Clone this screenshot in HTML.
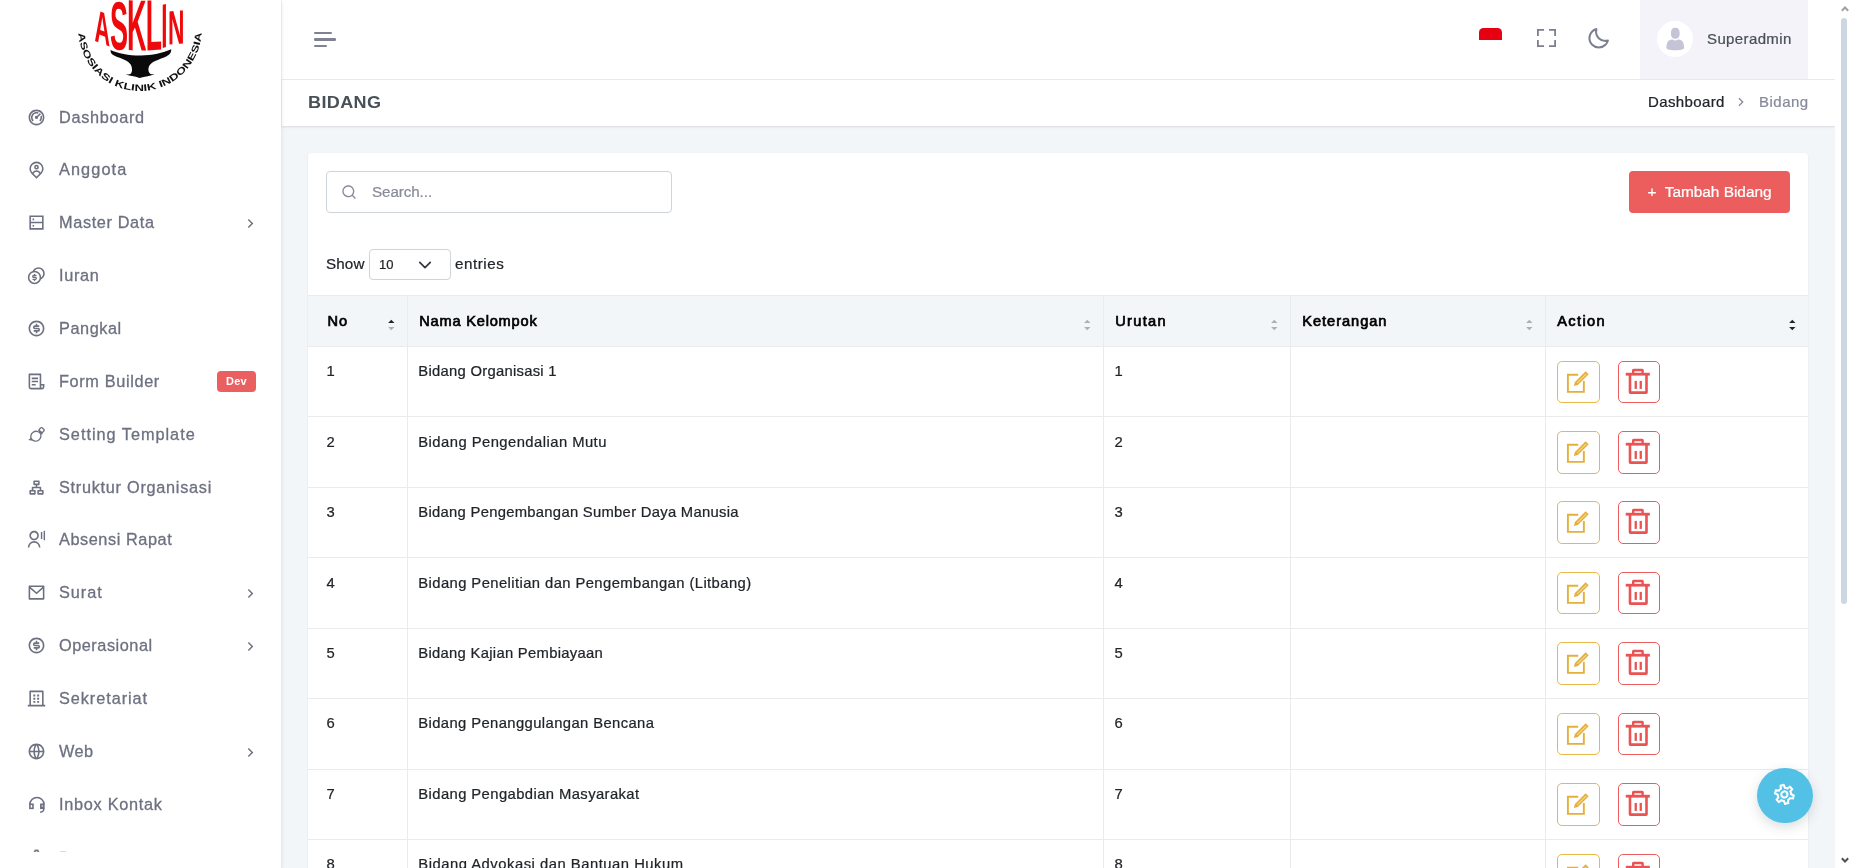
<!DOCTYPE html>
<html lang="id">
<head>
<meta charset="utf-8">
<title>Bidang</title>
<style>
*{box-sizing:border-box;margin:0;padding:0}
html,body{width:1853px;height:868px;overflow:hidden;background:#f3f6f9;font-family:"Liberation Sans",sans-serif;color:#212529}
body{position:relative;-webkit-text-stroke:.22px currentColor}
#sidebar,#topbar,#titlebar,#card{will-change:transform}
.abs{position:absolute}
/* sidebar */
#sidebar{position:absolute;left:0;top:0;width:281px;height:868px;background:#fff;box-shadow:0 2px 4px rgba(15,34,58,.14);z-index:5}
#menu{position:absolute;left:0;top:0;width:281px;height:852px;overflow:hidden}
.mi{-webkit-text-stroke:.3px currentColor;position:absolute;left:0;width:281px;height:52.86px;color:#6d7080;font-size:16.3px;letter-spacing:.1px}
.mi svg.ic{position:absolute;left:27px;top:17px;width:19px;height:19px;fill:#6d7080}
.mi span.t{position:absolute;left:59px;top:0;line-height:52.86px;white-space:nowrap}
.mi svg.ar{position:absolute;left:242px;top:18.700px;width:17px;height:17px;fill:#6d7080}
.badge{-webkit-text-stroke:0;position:absolute;left:217px;top:16.200px;width:39px;height:20.800px;background:#ea5f5f;color:#fff;border-radius:4px;font-size:11px;font-weight:bold;text-align:center;line-height:20.800px;letter-spacing:.3px}
/* topbar */
#topbar{position:absolute;left:282px;top:0;width:1553px;height:80px;background:#fff;border-bottom:1px solid #e9ebec}
#titlebar{position:absolute;left:282px;top:80px;width:1553px;height:46px;background:#fff;box-shadow:0 1px 2px rgba(56,65,74,.15)}
#user{position:absolute;left:1358px;top:0;width:168px;height:79px;background:#f3f3f9}
/* card */
#card{position:absolute;left:308px;top:153px;width:1499.700px;overflow:hidden;height:760px;background:#fff;border-radius:4px;box-shadow:0 1px 2px rgba(56,65,74,.12)}
#search{position:absolute;left:18px;top:18px;width:346px;height:42px;border:1px solid #ced4da;border-radius:4px;background:#fff}
#search span{position:absolute;left:45px;top:0;line-height:40px;font-size:15.2px;color:#878a99}
#add{position:absolute;left:1321px;top:18px;width:161px;height:42px;background:#ec5e5e;border-radius:4px;color:#fff;font-size:15.4px;line-height:42px;text-align:center;white-space:nowrap}
table{position:absolute;left:0;top:142px;width:1500px;border-collapse:collapse;table-layout:fixed;font-size:15.2px}
th{height:52px;background:#f3f6f9;text-align:left;font-weight:bold;padding:0 0 2px 11px;border:1px solid #e9ebec;font-size:14.6px;position:relative;color:#212529}
td{height:70.5px;vertical-align:top;padding:14px 0 0 11px;border:1px solid #e9ebec;color:#212529}
tr td:first-child,tr th:first-child{padding-left:18px}
.btn{position:absolute;width:42.7px;height:42.7px;border-radius:5px;background:#fff;overflow:visible}
.be{border:1px solid #e8b84a}
.bd{border:1px solid #ec5e5e;width:41.900px}
td.act{position:relative;padding:0}
.srt{position:absolute;right:11px;top:21px;width:8px;height:14px}

</style>
</head>
<body>
<div id="sidebar"><div id="menu">
<div style="position:absolute;left:0;top:0;width:200px;height:11px;font:bold 10px/11px 'Liberation Sans',sans-serif;color:#ee0a0a;white-space:nowrap;-webkit-text-stroke:0;letter-spacing:0"><span style="display:inline-block;transform-origin:0 0;transform:matrix(2.1613,0.8198,0,4.5785,94.462,-0.411)">A</span><span style="display:inline-block;transform-origin:0 0;transform:matrix(2.7041,0.1669,0,6.8314,103.000,-12.531)">S</span><span style="display:inline-block;transform-origin:0 0;transform:matrix(2.6935,0.0774,0,7.2238,112.906,-15.066)">K</span><span style="display:inline-block;transform-origin:0 0;transform:matrix(2.6500,-0.1559,0,7.2384,124.714,-14.741)">L</span><span style="display:inline-block;transform-origin:0 0;transform:matrix(2.2222,-0.5556,0,6.2791,134.292,-8.340)">I</span><span style="display:inline-block;transform-origin:0 0;transform:matrix(2.2793,-0.1701,0,4.7965,137.875,1.245)">N</span></div><svg class="abs" style="left:0;top:0" width="281" height="100" viewBox="0 0 281 100">
<path fill="#0a0a0a" d="M110.6 50.0 C118 53.5 130 55.8 141 55.6 C152 55.4 163 53 171.2 49.300 C171.6 53 169 55.500 164 57.500 C156 60.500 149.500 62.500 148.500 68 C148 71 149 73 150.500 74 C152 74.500 153.500 74.300 154.600 74.200 C151 76 145 76.200 139.500 77.900 C135 76.300 129 76 124.800 74.300 C127 74.600 129.500 74.600 131 73.500 C132.500 71.500 132.300 68 131 65 C128.500 60.500 121 58.500 115 56 C111.500 54.500 110.300 52.500 110.600 50.0 Z"/>
<path id="arc" fill="none" d="M78.400 29.400 A61.600 61.600 0 0 0 201.600 29.400"/>
<text font-family="'Liberation Sans',sans-serif" font-weight="bold" font-size="9.400" fill="#111" textLength="186" lengthAdjust="spacingAndGlyphs"><textPath href="#arc" startOffset="3.800" textLength="186" lengthAdjust="spacingAndGlyphs">ASOSIASI KLINIK INDONESIA</textPath></text>
</svg>
<div class="mi" style="top:90.60px"><svg class="ic" viewBox="0 0 24 24"><path d="M12 2c5.523 0 10 4.477 10 10s-4.477 10-10 10S2 17.523 2 12 6.477 2 12 2zm0 2a8 8 0 1 0 0 16 8 8 0 0 0 0-16zm0 1c1.018 0 1.985.217 2.858.608L13.295 7.17A5.002 5.002 0 0 0 7 12a4.98 4.98 0 0 0 1.464 3.536L7.05 16.95A6.978 6.978 0 0 1 5 12c0-3.866 3.134-7 7-7zm6.392 4.143c.39.872.608 1.84.608 2.857a6.978 6.978 0 0 1-2.05 4.95l-1.414-1.414A4.98 4.98 0 0 0 17 12c0-.44-.057-.868-.164-1.275l1.556-1.582zm-2.15-2.8l1.415 1.415-3.725 3.724a2 2 0 1 1-1.414-1.414l3.724-3.725z"/></svg><span class="t" id="m0" style="letter-spacing:0.68px">Dashboard</span></div>
<div class="mi" style="top:143.46px"><svg class="ic" viewBox="0 0 24 24"><path d="M17.084 15.812a7 7 0 1 0-10.168 0A5.996 5.996 0 0 1 12 13a5.996 5.996 0 0 1 5.084 2.812zm-8.699 1.473L12 20.899l3.615-3.614a4 4 0 0 0-7.230 0zM12 23.728l-6.364-6.364a9 9 0 1 1 12.728 0L12 23.728zM12 10a1 1 0 1 0 0-2 1 1 0 0 0 0 2zm0 2a3 3 0 1 1 0-6 3 3 0 0 1 0 6z"/></svg><span class="t" id="m1" style="letter-spacing:1.105px">Anggota</span></div>
<div class="mi" style="top:196.32px"><svg class="ic" viewBox="0 0 24 24"><path d="M21 3v18H3V3h18zm-2 10H5v6h14v-6zm0-8H5v6h14V5zM9 15v2H7v-2h2zm0-8v2H7V7h2z"/></svg><span class="t" id="m2" style="letter-spacing:0.631px">Master Data</span><svg class="ar" viewBox="0 0 24 24"><path d="M13.172 12l-4.950-4.950 1.414-1.414L16 12l-6.364 6.364-1.414-1.414z"/></svg></div>
<div class="mi" style="top:249.18px"><svg class="ic" viewBox="0 0 24 24"><circle cx="14.5" cy="9.500" r="7" fill="none" stroke="#6d7080" stroke-width="2"/><circle cx="9.500" cy="14.500" r="7.500" fill="#fff" stroke="#6d7080" stroke-width="2"/><path d="M7 16h3.600a.4.4 0 1 0 0-.8H8.400a2 2 0 1 1 0-4h.3V10h1.600v1.200H12v1.600H8.400a.4.4 0 1 0 0 .8h2.200a2 2 0 1 1 0 4h-.300V19H8.700v-1.400H7V16z"/></svg><span class="t" id="m3" style="letter-spacing:0.669px">Iuran</span></div>
<div class="mi" style="top:302.04px"><svg class="ic" viewBox="0 0 24 24"><path d="M12 22C6.477 22 2 17.523 2 12S6.477 2 12 2s10 4.477 10 10-4.477 10-10 10zm0-2a8 8 0 1 0 0-16 8 8 0 0 0 0 16zm-3.500-6H14a.5.5 0 1 0 0-1h-4a2.500 2.500 0 1 1 0-5h1V6h2v2h2.500v2H10a.5.5 0 1 0 0 1h4a2.500 2.500 0 1 1 0 5h-1v2h-2v-2H8.500v-2z"/></svg><span class="t" id="m4" style="letter-spacing:0.559px">Pangkal</span></div>
<div class="mi" style="top:354.90px"><svg class="ic" viewBox="0 0 24 24"><path d="M19 22H5a3 3 0 0 1-3-3V3a1 1 0 0 1 1-1h14a1 1 0 0 1 1 1v12h4v4a3 3 0 0 1-3 3zm-1-5v2a1 1 0 0 0 2 0v-2h-2zm-2 3V4H4v15a1 1 0 0 0 1 1h11zM6 7h8v2H6V7zm0 4h8v2H6v-2zm0 4h5v2H6v-2z"/></svg><span class="t" id="m5" style="letter-spacing:0.645px">Form Builder</span><span class="badge">Dev</span></div>
<div class="mi" style="top:407.76px"><svg class="ic" viewBox="0 0 24 24"><g fill="none" stroke="#6d7080" stroke-width="1.650" stroke-linejoin="round"><ellipse cx="11.200" cy="14.200" rx="6.600" ry="6.100" transform="rotate(-35 11.200 14.200)"/><rect x="15.800" y="3.900" width="5.600" height="4.800" rx="1.300" transform="rotate(40 18.600 6.300)"/><path d="M14.600 6.400 L19.400 11.600"/></g><path d="M5.300 16.200 L1.400 18.900 L7.200 19.800Z" fill="#6d7080"/></svg><span class="t" id="m6" style="letter-spacing:0.981px">Setting Template</span></div>
<div class="mi" style="top:460.62px"><svg class="ic" viewBox="0 0 24 24"><path d="M15 3a1 1 0 0 1 1 1v4a1 1 0 0 1-1 1h-2v2h4a1 1 0 0 1 1 1v3h2a1 1 0 0 1 1 1v4a1 1 0 0 1-1 1h-6a1 1 0 0 1-1-1v-4a1 1 0 0 1 1-1h2v-2H8v2h2a1 1 0 0 1 1 1v4a1 1 0 0 1-1 1H4a1 1 0 0 1-1-1v-4a1 1 0 0 1 1-1h2v-3a1 1 0 0 1 1-1h4V9H9a1 1 0 0 1-1-1V4a1 1 0 0 1 1-1h6zM9 17H5v2h4v-2zm10 0h-4v2h4v-2zM14 5h-4v2h4V5z"/></svg><span class="t" id="m7" style="letter-spacing:0.719px">Struktur Organisasi</span></div>
<div class="mi" style="top:513.48px"><svg class="ic" viewBox="0 0 24 24"><path d="M1 22a8 8 0 1 1 16 0h-2a6 6 0 1 0-12 0H1zm8-9c-3.315 0-6-2.685-6-6s2.685-6 6-6 6 2.685 6 6-2.685 6-6 6zm0-2c2.210 0 4-1.790 4-4s-1.790-4-4-4-4 1.790-4 4 1.790 4 4 4z"/><path d="M17.500 2.500h1.800v9h-1.800zM21 1h1.800v12H21z"/></svg><span class="t" id="m8" style="letter-spacing:0.566px">Absensi Rapat</span></div>
<div class="mi" style="top:566.34px"><svg class="ic" viewBox="0 0 24 24"><path d="M3 3h18a1 1 0 0 1 1 1v16a1 1 0 0 1-1 1H3a1 1 0 0 1-1-1V4a1 1 0 0 1 1-1zm17 4.238l-7.928 7.100L4 7.216V19h16V7.238zM4.511 5l7.550 6.662L19.502 5H4.511z"/></svg><span class="t" id="m9" style="letter-spacing:0.945px">Surat</span><svg class="ar" viewBox="0 0 24 24"><path d="M13.172 12l-4.950-4.950 1.414-1.414L16 12l-6.364 6.364-1.414-1.414z"/></svg></div>
<div class="mi" style="top:619.20px"><svg class="ic" viewBox="0 0 24 24"><path d="M12 22C6.477 22 2 17.523 2 12S6.477 2 12 2s10 4.477 10 10-4.477 10-10 10zm0-2a8 8 0 1 0 0-16 8 8 0 0 0 0 16zm-3.500-6H14a.5.5 0 1 0 0-1h-4a2.500 2.500 0 1 1 0-5h1V6h2v2h2.500v2H10a.5.5 0 1 0 0 1h4a2.500 2.500 0 1 1 0 5h-1v2h-2v-2H8.500v-2z"/></svg><span class="t" id="m10" style="letter-spacing:0.53px">Operasional</span><svg class="ar" viewBox="0 0 24 24"><path d="M13.172 12l-4.950-4.950 1.414-1.414L16 12l-6.364 6.364-1.414-1.414z"/></svg></div>
<div class="mi" style="top:672.06px"><svg class="ic" viewBox="0 0 24 24"><path d="M21 20h2v2H1v-2h2V3a1 1 0 0 1 1-1h16a1 1 0 0 1 1 1v17zm-2 0V4H5v16h14zM8 7h2.500v2.500H8zM12.800 7h2.500v2.500h-2.500zM8 11h2.500v2.500H8zM12.800 11h2.500v2.500h-2.500zM8 15h2.500v2.500H8zM12.800 15h2.500v2.500h-2.500z"/></svg><span class="t" id="m11" style="letter-spacing:0.937px">Sekretariat</span></div>
<div class="mi" style="top:724.92px"><svg class="ic" viewBox="0 0 24 24"><path d="M12 22C6.477 22 2 17.523 2 12S6.477 2 12 2s10 4.477 10 10-4.477 10-10 10zm-2.290-2.333A17.900 17.900 0 0 1 8.027 13H4.062a8.008 8.008 0 0 0 5.648 6.667zM10.030 13c.151 2.439.848 4.730 1.970 6.752A15.905 15.905 0 0 0 13.970 13h-3.940zm9.908 0h-3.965a17.900 17.900 0 0 1-1.683 6.667A8.008 8.008 0 0 0 19.938 13zM4.062 11h3.965A17.900 17.900 0 0 1 9.710 4.333 8.008 8.008 0 0 0 4.062 11zm5.969 0h3.938A15.905 15.905 0 0 0 12 4.248 15.905 15.905 0 0 0 10.030 11zm4.259-6.667A17.900 17.900 0 0 1 15.973 11h3.965a8.008 8.008 0 0 0-5.648-6.667z"/></svg><span class="t" id="m12" style="letter-spacing:0.456px">Web</span><svg class="ar" viewBox="0 0 24 24"><path d="M13.172 12l-4.950-4.950 1.414-1.414L16 12l-6.364 6.364-1.414-1.414z"/></svg></div>
<div class="mi" style="top:777.78px"><svg class="ic" viewBox="0 0 24 24"><g fill="none" stroke="#6d7080" stroke-width="2"><path d="M3.650 12 A8.900 8.900 0 0 1 21.450 12"/><rect x="3.650" y="11.700" width="3.900" height="5.200"/><rect x="17.400" y="11.700" width="4" height="5.200" fill="#6d7080" stroke-width="1.800"/><path d="M21.300 17 Q21.300 21.300 16.500 21.800" stroke-width="1.800"/></g><rect x="18.600" y="12.900" width="1.200" height="2" fill="#fff"/></svg><span class="t" id="m13" style="letter-spacing:0.723px">Inbox Kontak</span></div>
<div class="mi" style="top:830.64px"><svg class="ic" viewBox="0 0 24 24"><path d="M3.340 17a10.018 10.018 0 0 1-.978-2.326 3 3 0 0 0 .002-5.347A9.990 9.990 0 0 1 4.865 4.990a3 3 0 0 0 4.631-2.674 9.990 9.990 0 0 1 5.007.002 3 3 0 0 0 4.632 2.672c.579.590 1.093 1.261 1.525 2.010.433.749.757 1.530.978 2.326a3 3 0 0 0-.002 5.347 9.990 9.990 0 0 1-2.501 4.337 3 3 0 0 0-4.631 2.674 9.990 9.990 0 0 1-5.007-.002 3 3 0 0 0-4.632-2.672A10.018 10.018 0 0 1 3.340 17zm5.660.196a4.993 4.993 0 0 1 2.250 2.770c.499.047 1 .048 1.499.001A4.993 4.993 0 0 1 15 17.197a4.993 4.993 0 0 1 3.525-.565c.290-.408.540-.843.748-1.298A4.993 4.993 0 0 1 18 12c0-1.260.470-2.437 1.273-3.334a8.126 8.126 0 0 0-.750-1.298A4.993 4.993 0 0 1 15 6.804a4.993 4.993 0 0 1-2.250-2.770c-.499-.047-1-.048-1.499-.001A4.993 4.993 0 0 1 9 6.803a4.993 4.993 0 0 1-3.525.565 7.990 7.990 0 0 0-.748 1.298A4.993 4.993 0 0 1 6 12c0 1.260-.470 2.437-1.273 3.334a8.126 8.126 0 0 0 .750 1.298A4.993 4.993 0 0 1 9 17.196zM12 15a3 3 0 1 1 0-6 3 3 0 0 1 0 6zm0-2a1 1 0 1 0 0-2 1 1 0 0 0 0 2z"/></svg><span class="t" id="m14" style="letter-spacing:0px;top:1.300px">Pengaturan</span></div>

</div></div>
<div id="topbar">
<div class="abs" style="left:32px;top:32px;width:17.8px;height:2px;background:#7f8292;border-radius:1px"></div>
<div class="abs" style="left:32px;top:38.3px;width:22px;height:2.4px;background:#7f8292;border-radius:1.2px"></div>
<div class="abs" style="left:32px;top:45px;width:13px;height:2px;background:#7f8292;border-radius:1px"></div>
<div class="abs" style="left:1197px;top:28px;width:23px;height:11.5px;background:#e70011;border-radius:4.5px 4.5px 0 0"></div>
<svg class="abs" style="left:1255px;top:29px" width="19" height="18" viewBox="0 0 19 18" fill="none" stroke="#7c7f90" stroke-width="1.8"><path d="M.9 7V.9H7M12 .9H18.100V7M18.100 11V17.100H12M7 17.100H.9V11"/></svg>
<svg class="abs" style="left:1303.500px;top:25.500px" width="25" height="25" viewBox="0 0 24 24" fill="#7c7f90"><path d="M20.742 13.045a8.088 8.088 0 0 1-2.077.271c-2.135 0-4.140-.830-5.646-2.336a8.025 8.025 0 0 1-2.064-7.723A1 1 0 0 0 9.730 2.034a10.014 10.014 0 0 0-4.489 2.582c-3.898 3.898-3.898 10.243 0 14.143a9.937 9.937 0 0 0 7.072 2.930 9.930 9.930 0 0 0 7.070-2.929 10.007 10.007 0 0 0 2.583-4.491 1.001 1.001 0 0 0-1.224-1.224zm-2.772 4.301a7.947 7.947 0 0 1-5.656 2.343 7.953 7.953 0 0 1-5.658-2.344c-3.118-3.119-3.118-8.195 0-11.314a7.923 7.923 0 0 1 2.060-1.483 10.027 10.027 0 0 0 2.890 7.848 9.972 9.972 0 0 0 7.848 2.891 8.036 8.036 0 0 1-1.484 2.059z"/></svg>
<div id="user">
<div class="abs" style="left:16.800px;top:20.900px;width:36.300px;height:36.300px;border-radius:50%;background:#fff;overflow:hidden"><svg class="abs" style="left:0;top:0" width="36.300" height="36.300" viewBox="0 0 36.300 36.300"><rect x="14" y="6.800" width="8.600" height="10.900" rx="4" ry="4.300" fill="#c5c3d6"/><path d="M9.400 27 C9.600 22 10.500 19.600 14.500 18.500 L15.600 18.400 C17 19.900 19.600 19.900 21 18.400 L22.100 18.500 C26.100 19.600 27 22 27.200 27 C27 28.600 22 29.300 18.300 29.300 C14.600 29.300 9.600 28.600 9.400 27Z" fill="#c5c3d6"/></svg></div>
<span id="uname" style="letter-spacing:0.379px;position:absolute;left:67px;top:0;line-height:77px;font-size:15px;color:#495057;white-space:nowrap">Superadmin</span>
</div>

</div>
<div id="titlebar">
<span style="letter-spacing:.35px;transform:scaleX(1.075);transform-origin:0 50%;position:absolute;left:26px;top:1.300px;line-height:44px;font-size:16.800px;font-weight:bold;-webkit-text-stroke:0;color:#495057;">BIDANG</span>
<span id="bc1" style="letter-spacing:0.376px;position:absolute;left:1366px;top:0;line-height:44px;font-size:15px;color:#212529;">Dashboard</span>
<svg class="abs" style="left:1451px;top:14px" width="16" height="16" viewBox="0 0 24 24" fill="#878a99"><path d="M13.172 12l-4.950-4.950 1.414-1.414L16 12l-6.364 6.364-1.414-1.414z"/></svg>
<span id="bc2" style="letter-spacing:0.496px;position:absolute;left:1477px;top:0;line-height:44px;font-size:15px;color:#878a99;">Bidang</span>

</div>
<div id="card">
<div id="search"><svg class="abs" style="left:14px;top:12px" width="16" height="16" viewBox="0 0 24 24" fill="#878a99"><path d="M18.031 16.617l4.283 4.282-1.415 1.415-4.282-4.283A8.960 8.960 0 0 1 11 20c-4.968 0-9-4.032-9-9s4.032-9 9-9 9 4.032 9 9a8.960 8.960 0 0 1-1.969 5.617zm-2.006-.742A6.977 6.977 0 0 0 18 11c0-3.868-3.133-7-7-7-3.868 0-7 3.132-7 7 0 3.867 3.132 7 7 7a6.977 6.977 0 0 0 4.875-1.975l.150-.150z"/></svg><span id="sph" style="letter-spacing:-0.085px;white-space:nowrap">Search...</span></div>
<div id="add"><span id="addt" style="letter-spacing:-0.008px;white-space:nowrap">+&nbsp; Tambah Bidang</span></div>
<span id="show" style="letter-spacing:0.133px;position:absolute;left:18px;top:94.700px;line-height:31px;font-size:15.200px;color:#212529">Show</span>
<div class="abs" style="left:61px;top:96px;width:82px;height:31px;border:1px solid #ced4da;border-radius:4px;background:#fff"><span class="abs" style="left:9px;top:0;line-height:29px;font-size:13px;color:#212529">10</span><svg class="abs" style="left:48px;top:8px" width="14" height="14" viewBox="0 0 16 16" fill="none" stroke="#343a40" stroke-width="2" stroke-linecap="round" stroke-linejoin="round"><path d="M2 5l6 6 6-6"/></svg></div>
<span id="entries" style="letter-spacing:0.534px;position:absolute;left:147px;top:94.700px;line-height:31px;font-size:15.200px;color:#212529">entries</span>
<div class="abs" style="left:0;top:142px;width:1500px;height:51.50px;background:#f3f6f9;border-top:1px solid #e9ebec"></div><span id="h0" style="letter-spacing:1.044px;position:absolute;left:19.4px;top:157.5px;font-size:14.6px;font-weight:normal;-webkit-text-stroke:.7px #000;line-height:20px;white-space:nowrap;color:#000">No</span><svg class="abs" style="left:80.1px;top:166px" width="7" height="12" viewBox="0 0 7 12"><path d="M3.300 .8 L6.500 4.100 L.1 4.100z" fill="#212529"/><path d="M3.300 11.300 L6.500 8 L.1 8z" fill="#adafb2"/></svg><span id="h1" style="letter-spacing:0.801px;position:absolute;left:111.2px;top:157.5px;font-size:14.6px;font-weight:normal;-webkit-text-stroke:.7px #000;line-height:20px;white-space:nowrap;color:#000">Nama Kelompok</span><svg class="abs" style="left:776.1px;top:166px" width="7" height="12" viewBox="0 0 7 12"><path d="M3.300 .8 L6.500 4.100 L.1 4.100z" fill="#adafb2"/><path d="M3.300 11.300 L6.500 8 L.1 8z" fill="#adafb2"/></svg><span id="h2" style="letter-spacing:1.318px;position:absolute;left:807.2px;top:157.5px;font-size:14.6px;font-weight:normal;-webkit-text-stroke:.7px #000;line-height:20px;white-space:nowrap;color:#000">Urutan</span><svg class="abs" style="left:963.2px;top:166px" width="7" height="12" viewBox="0 0 7 12"><path d="M3.300 .8 L6.500 4.100 L.1 4.100z" fill="#adafb2"/><path d="M3.300 11.300 L6.500 8 L.1 8z" fill="#adafb2"/></svg><span id="h3" style="letter-spacing:0.97px;position:absolute;left:994.3px;top:157.5px;font-size:14.6px;font-weight:normal;-webkit-text-stroke:.7px #000;line-height:20px;white-space:nowrap;color:#000">Keterangan</span><svg class="abs" style="left:1218.1px;top:166px" width="7" height="12" viewBox="0 0 7 12"><path d="M3.300 .8 L6.500 4.100 L.1 4.100z" fill="#adafb2"/><path d="M3.300 11.300 L6.500 8 L.1 8z" fill="#adafb2"/></svg><span id="h4" style="letter-spacing:1.368px;position:absolute;left:1249.2px;top:157.5px;font-size:14.6px;font-weight:normal;-webkit-text-stroke:.7px #000;line-height:20px;white-space:nowrap;color:#000">Action</span><svg class="abs" style="left:1480.6px;top:166px" width="7" height="12" viewBox="0 0 7 12"><path d="M3.300 .8 L6.500 4.100 L.1 4.100z" fill="#212529"/><path d="M3.300 11.300 L6.500 8 L.1 8z" fill="#212529"/></svg><div class="abs" style="left:98.8px;top:142px;width:1px;height:620px;background:#e9ebec"></div><div class="abs" style="left:794.8px;top:142px;width:1px;height:620px;background:#e9ebec"></div><div class="abs" style="left:981.9px;top:142px;width:1px;height:620px;background:#e9ebec"></div><div class="abs" style="left:1236.8px;top:142px;width:1px;height:620px;background:#e9ebec"></div><div class="abs" style="left:0;top:193.00px;width:1500px;height:1px;background:#e9ebec"></div><div class="abs" style="left:0;top:263.00px;width:1500px;height:1px;background:#e9ebec"></div><div class="abs" style="left:0;top:334.00px;width:1500px;height:1px;background:#e9ebec"></div><div class="abs" style="left:0;top:404.00px;width:1500px;height:1px;background:#e9ebec"></div><div class="abs" style="left:0;top:475.00px;width:1500px;height:1px;background:#e9ebec"></div><div class="abs" style="left:0;top:545.00px;width:1500px;height:1px;background:#e9ebec"></div><div class="abs" style="left:0;top:616.00px;width:1500px;height:1px;background:#e9ebec"></div><div class="abs" style="left:0;top:686.00px;width:1500px;height:1px;background:#e9ebec"></div><div class="abs" style="left:0;top:756.00px;width:1500px;height:1px;background:#e9ebec"></div><span style="position:absolute;top:207.60px;font-size:14.8px;line-height:20px;white-space:nowrap;color:#212529;left:18.6px">1</span><span id="r1" style="letter-spacing:0.274px;position:absolute;top:207.60px;font-size:14.8px;line-height:20px;white-space:nowrap;color:#212529;left:110.3px">Bidang Organisasi 1</span><span style="position:absolute;top:207.60px;font-size:14.8px;line-height:20px;white-space:nowrap;color:#212529;left:806.4px">1</span><div class="btn be" style="left:1249.0px;top:207.50px"><svg viewBox="0 0 43 43" width="43" height="43" style="position:absolute;left:-1px;top:-1px"><path d="M21.200 13.750 H10.900 V30.850 H26.850 V20" fill="none" stroke="#e5b03a" stroke-width="1.900"/><path d="M28.600 10.200 L31.700 13.300 L20.900 24.100 L16.900 25.100 L17.900 21 Z" fill="#e5b03a"/><path d="M20.200 21.900 L29.300 12.800" stroke="#fff" stroke-opacity=".5" stroke-width="1.100"/></svg></div><div class="btn bd" style="left:1310.0px;top:207.50px"><svg viewBox="0 0 43 43" width="43" height="43" style="position:absolute;left:-1.400px;top:-1px" fill="#ea5353"><rect x="7.750" y="11.800" width="24.100" height="2.800"/><path d="M14 12.500 V9.300 Q14 7.700 15.600 7.700 H24.200 Q25.800 7.700 25.800 9.300 V12.500 H23.400 V10.200 H16.400 V12.500 Z"/><path d="M10.700 14 H13.300 V30.300 H27.200 V14 H29.800 V31.300 Q29.800 33 28.100 33 H12.400 Q10.700 33 10.700 31.300 Z"/><rect x="16.600" y="19.900" width="2.300" height="8"/><rect x="21.600" y="19.900" width="2.300" height="8"/></svg></div>
<span style="position:absolute;top:278.73px;font-size:14.8px;line-height:20px;white-space:nowrap;color:#212529;left:18.6px">2</span><span id="r2" style="letter-spacing:0.452px;position:absolute;top:278.73px;font-size:14.8px;line-height:20px;white-space:nowrap;color:#212529;left:110.3px">Bidang Pengendalian Mutu</span><span style="position:absolute;top:278.73px;font-size:14.8px;line-height:20px;white-space:nowrap;color:#212529;left:806.4px">2</span><div class="btn be" style="left:1249.0px;top:277.93px"><svg viewBox="0 0 43 43" width="43" height="43" style="position:absolute;left:-1px;top:-1px"><path d="M21.200 13.750 H10.900 V30.850 H26.850 V20" fill="none" stroke="#e5b03a" stroke-width="1.900"/><path d="M28.600 10.200 L31.700 13.300 L20.900 24.100 L16.900 25.100 L17.900 21 Z" fill="#e5b03a"/><path d="M20.200 21.900 L29.300 12.800" stroke="#fff" stroke-opacity=".5" stroke-width="1.100"/></svg></div><div class="btn bd" style="left:1310.0px;top:277.93px"><svg viewBox="0 0 43 43" width="43" height="43" style="position:absolute;left:-1.400px;top:-1px" fill="#ea5353"><rect x="7.750" y="11.800" width="24.100" height="2.800"/><path d="M14 12.500 V9.300 Q14 7.700 15.600 7.700 H24.200 Q25.800 7.700 25.800 9.300 V12.500 H23.400 V10.200 H16.400 V12.500 Z"/><path d="M10.700 14 H13.300 V30.300 H27.200 V14 H29.800 V31.300 Q29.800 33 28.100 33 H12.400 Q10.700 33 10.700 31.300 Z"/><rect x="16.600" y="19.900" width="2.300" height="8"/><rect x="21.600" y="19.900" width="2.300" height="8"/></svg></div>
<span style="position:absolute;top:349.16px;font-size:14.8px;line-height:20px;white-space:nowrap;color:#212529;left:18.6px">3</span><span id="r3" style="letter-spacing:0.287px;position:absolute;top:349.16px;font-size:14.8px;line-height:20px;white-space:nowrap;color:#212529;left:110.3px">Bidang Pengembangan Sumber Daya Manusia</span><span style="position:absolute;top:349.16px;font-size:14.8px;line-height:20px;white-space:nowrap;color:#212529;left:806.4px">3</span><div class="btn be" style="left:1249.0px;top:348.36px"><svg viewBox="0 0 43 43" width="43" height="43" style="position:absolute;left:-1px;top:-1px"><path d="M21.200 13.750 H10.900 V30.850 H26.850 V20" fill="none" stroke="#e5b03a" stroke-width="1.900"/><path d="M28.600 10.200 L31.700 13.300 L20.900 24.100 L16.900 25.100 L17.900 21 Z" fill="#e5b03a"/><path d="M20.200 21.900 L29.300 12.800" stroke="#fff" stroke-opacity=".5" stroke-width="1.100"/></svg></div><div class="btn bd" style="left:1310.0px;top:348.36px"><svg viewBox="0 0 43 43" width="43" height="43" style="position:absolute;left:-1.400px;top:-1px" fill="#ea5353"><rect x="7.750" y="11.800" width="24.100" height="2.800"/><path d="M14 12.500 V9.300 Q14 7.700 15.600 7.700 H24.200 Q25.800 7.700 25.800 9.300 V12.500 H23.400 V10.200 H16.400 V12.500 Z"/><path d="M10.700 14 H13.300 V30.300 H27.200 V14 H29.800 V31.300 Q29.800 33 28.100 33 H12.400 Q10.700 33 10.700 31.300 Z"/><rect x="16.600" y="19.900" width="2.300" height="8"/><rect x="21.600" y="19.900" width="2.300" height="8"/></svg></div>
<span style="position:absolute;top:419.59px;font-size:14.8px;line-height:20px;white-space:nowrap;color:#212529;left:18.6px">4</span><span id="r4" style="letter-spacing:0.412px;position:absolute;top:419.59px;font-size:14.8px;line-height:20px;white-space:nowrap;color:#212529;left:110.3px">Bidang Penelitian dan Pengembangan (Litbang)</span><span style="position:absolute;top:419.59px;font-size:14.8px;line-height:20px;white-space:nowrap;color:#212529;left:806.4px">4</span><div class="btn be" style="left:1249.0px;top:418.79px"><svg viewBox="0 0 43 43" width="43" height="43" style="position:absolute;left:-1px;top:-1px"><path d="M21.200 13.750 H10.900 V30.850 H26.850 V20" fill="none" stroke="#e5b03a" stroke-width="1.900"/><path d="M28.600 10.200 L31.700 13.300 L20.900 24.100 L16.900 25.100 L17.900 21 Z" fill="#e5b03a"/><path d="M20.200 21.900 L29.300 12.800" stroke="#fff" stroke-opacity=".5" stroke-width="1.100"/></svg></div><div class="btn bd" style="left:1310.0px;top:418.79px"><svg viewBox="0 0 43 43" width="43" height="43" style="position:absolute;left:-1.400px;top:-1px" fill="#ea5353"><rect x="7.750" y="11.800" width="24.100" height="2.800"/><path d="M14 12.500 V9.300 Q14 7.700 15.600 7.700 H24.200 Q25.800 7.700 25.800 9.300 V12.500 H23.400 V10.200 H16.400 V12.500 Z"/><path d="M10.700 14 H13.300 V30.300 H27.200 V14 H29.800 V31.300 Q29.800 33 28.100 33 H12.400 Q10.700 33 10.700 31.300 Z"/><rect x="16.600" y="19.900" width="2.300" height="8"/><rect x="21.600" y="19.900" width="2.300" height="8"/></svg></div>
<span style="position:absolute;top:490.02px;font-size:14.8px;line-height:20px;white-space:nowrap;color:#212529;left:18.6px">5</span><span id="r5" style="letter-spacing:0.296px;position:absolute;top:490.02px;font-size:14.8px;line-height:20px;white-space:nowrap;color:#212529;left:110.3px">Bidang Kajian Pembiayaan</span><span style="position:absolute;top:490.02px;font-size:14.8px;line-height:20px;white-space:nowrap;color:#212529;left:806.4px">5</span><div class="btn be" style="left:1249.0px;top:489.22px"><svg viewBox="0 0 43 43" width="43" height="43" style="position:absolute;left:-1px;top:-1px"><path d="M21.200 13.750 H10.900 V30.850 H26.850 V20" fill="none" stroke="#e5b03a" stroke-width="1.900"/><path d="M28.600 10.200 L31.700 13.300 L20.900 24.100 L16.900 25.100 L17.900 21 Z" fill="#e5b03a"/><path d="M20.200 21.900 L29.300 12.800" stroke="#fff" stroke-opacity=".5" stroke-width="1.100"/></svg></div><div class="btn bd" style="left:1310.0px;top:489.22px"><svg viewBox="0 0 43 43" width="43" height="43" style="position:absolute;left:-1.400px;top:-1px" fill="#ea5353"><rect x="7.750" y="11.800" width="24.100" height="2.800"/><path d="M14 12.500 V9.300 Q14 7.700 15.600 7.700 H24.200 Q25.800 7.700 25.800 9.300 V12.500 H23.400 V10.200 H16.400 V12.500 Z"/><path d="M10.700 14 H13.300 V30.300 H27.200 V14 H29.800 V31.300 Q29.800 33 28.100 33 H12.400 Q10.700 33 10.700 31.300 Z"/><rect x="16.600" y="19.900" width="2.300" height="8"/><rect x="21.600" y="19.900" width="2.300" height="8"/></svg></div>
<span style="position:absolute;top:560.45px;font-size:14.8px;line-height:20px;white-space:nowrap;color:#212529;left:18.6px">6</span><span id="r6" style="letter-spacing:0.392px;position:absolute;top:560.45px;font-size:14.8px;line-height:20px;white-space:nowrap;color:#212529;left:110.3px">Bidang Penanggulangan Bencana</span><span style="position:absolute;top:560.45px;font-size:14.8px;line-height:20px;white-space:nowrap;color:#212529;left:806.4px">6</span><div class="btn be" style="left:1249.0px;top:559.65px"><svg viewBox="0 0 43 43" width="43" height="43" style="position:absolute;left:-1px;top:-1px"><path d="M21.200 13.750 H10.900 V30.850 H26.850 V20" fill="none" stroke="#e5b03a" stroke-width="1.900"/><path d="M28.600 10.200 L31.700 13.300 L20.900 24.100 L16.900 25.100 L17.900 21 Z" fill="#e5b03a"/><path d="M20.200 21.900 L29.300 12.800" stroke="#fff" stroke-opacity=".5" stroke-width="1.100"/></svg></div><div class="btn bd" style="left:1310.0px;top:559.65px"><svg viewBox="0 0 43 43" width="43" height="43" style="position:absolute;left:-1.400px;top:-1px" fill="#ea5353"><rect x="7.750" y="11.800" width="24.100" height="2.800"/><path d="M14 12.500 V9.300 Q14 7.700 15.600 7.700 H24.200 Q25.800 7.700 25.800 9.300 V12.500 H23.400 V10.200 H16.400 V12.500 Z"/><path d="M10.700 14 H13.300 V30.300 H27.200 V14 H29.800 V31.300 Q29.800 33 28.100 33 H12.400 Q10.700 33 10.700 31.300 Z"/><rect x="16.600" y="19.900" width="2.300" height="8"/><rect x="21.600" y="19.900" width="2.300" height="8"/></svg></div>
<span style="position:absolute;top:630.88px;font-size:14.8px;line-height:20px;white-space:nowrap;color:#212529;left:18.6px">7</span><span id="r7" style="letter-spacing:0.409px;position:absolute;top:630.88px;font-size:14.8px;line-height:20px;white-space:nowrap;color:#212529;left:110.3px">Bidang Pengabdian Masyarakat</span><span style="position:absolute;top:630.88px;font-size:14.8px;line-height:20px;white-space:nowrap;color:#212529;left:806.4px">7</span><div class="btn be" style="left:1249.0px;top:630.08px"><svg viewBox="0 0 43 43" width="43" height="43" style="position:absolute;left:-1px;top:-1px"><path d="M21.200 13.750 H10.900 V30.850 H26.850 V20" fill="none" stroke="#e5b03a" stroke-width="1.900"/><path d="M28.600 10.200 L31.700 13.300 L20.900 24.100 L16.900 25.100 L17.900 21 Z" fill="#e5b03a"/><path d="M20.200 21.900 L29.300 12.800" stroke="#fff" stroke-opacity=".5" stroke-width="1.100"/></svg></div><div class="btn bd" style="left:1310.0px;top:630.08px"><svg viewBox="0 0 43 43" width="43" height="43" style="position:absolute;left:-1.400px;top:-1px" fill="#ea5353"><rect x="7.750" y="11.800" width="24.100" height="2.800"/><path d="M14 12.500 V9.300 Q14 7.700 15.600 7.700 H24.200 Q25.800 7.700 25.800 9.300 V12.500 H23.400 V10.200 H16.400 V12.500 Z"/><path d="M10.700 14 H13.300 V30.300 H27.200 V14 H29.800 V31.300 Q29.800 33 28.100 33 H12.400 Q10.700 33 10.700 31.300 Z"/><rect x="16.600" y="19.900" width="2.300" height="8"/><rect x="21.600" y="19.900" width="2.300" height="8"/></svg></div>
<span style="position:absolute;top:701.31px;font-size:14.8px;line-height:20px;white-space:nowrap;color:#212529;left:18.6px">8</span><span id="r8" style="letter-spacing:0.511px;position:absolute;top:701.31px;font-size:14.8px;line-height:20px;white-space:nowrap;color:#212529;left:110.3px">Bidang Advokasi dan Bantuan Hukum</span><span style="position:absolute;top:701.31px;font-size:14.8px;line-height:20px;white-space:nowrap;color:#212529;left:806.4px">8</span><div class="btn be" style="left:1249.0px;top:700.51px"><svg viewBox="0 0 43 43" width="43" height="43" style="position:absolute;left:-1px;top:-1px"><path d="M21.200 13.750 H10.900 V30.850 H26.850 V20" fill="none" stroke="#e5b03a" stroke-width="1.900"/><path d="M28.600 10.200 L31.700 13.300 L20.900 24.100 L16.900 25.100 L17.900 21 Z" fill="#e5b03a"/><path d="M20.200 21.900 L29.300 12.800" stroke="#fff" stroke-opacity=".5" stroke-width="1.100"/></svg></div><div class="btn bd" style="left:1310.0px;top:700.51px"><svg viewBox="0 0 43 43" width="43" height="43" style="position:absolute;left:-1.400px;top:-1px" fill="#ea5353"><rect x="7.750" y="11.800" width="24.100" height="2.800"/><path d="M14 12.500 V9.300 Q14 7.700 15.600 7.700 H24.200 Q25.800 7.700 25.800 9.300 V12.500 H23.400 V10.200 H16.400 V12.500 Z"/><path d="M10.700 14 H13.300 V30.300 H27.200 V14 H29.800 V31.300 Q29.800 33 28.100 33 H12.400 Q10.700 33 10.700 31.300 Z"/><rect x="16.600" y="19.900" width="2.300" height="8"/><rect x="21.600" y="19.900" width="2.300" height="8"/></svg></div>
<span style="position:absolute;top:771.74px;font-size:14.8px;line-height:20px;white-space:nowrap;color:#212529;left:18.6px">9</span><span id="r9" style="letter-spacing:0px;position:absolute;top:771.74px;font-size:14.8px;line-height:20px;white-space:nowrap;color:#212529;left:110.3px">Bidang Kerjasama</span><span style="position:absolute;top:771.74px;font-size:14.8px;line-height:20px;white-space:nowrap;color:#212529;left:806.4px">9</span><div class="btn be" style="left:1249.0px;top:770.94px"><svg viewBox="0 0 43 43" width="43" height="43" style="position:absolute;left:-1px;top:-1px"><path d="M21.200 13.750 H10.900 V30.850 H26.850 V20" fill="none" stroke="#e5b03a" stroke-width="1.900"/><path d="M28.600 10.200 L31.700 13.300 L20.900 24.100 L16.900 25.100 L17.900 21 Z" fill="#e5b03a"/><path d="M20.200 21.900 L29.300 12.800" stroke="#fff" stroke-opacity=".5" stroke-width="1.100"/></svg></div><div class="btn bd" style="left:1310.0px;top:770.94px"><svg viewBox="0 0 43 43" width="43" height="43" style="position:absolute;left:-1.400px;top:-1px" fill="#ea5353"><rect x="7.750" y="11.800" width="24.100" height="2.800"/><path d="M14 12.500 V9.300 Q14 7.700 15.600 7.700 H24.200 Q25.800 7.700 25.800 9.300 V12.500 H23.400 V10.200 H16.400 V12.500 Z"/><path d="M10.700 14 H13.300 V30.300 H27.200 V14 H29.800 V31.300 Q29.800 33 28.100 33 H12.400 Q10.700 33 10.700 31.300 Z"/><rect x="16.600" y="19.900" width="2.300" height="8"/><rect x="21.600" y="19.900" width="2.300" height="8"/></svg></div>

</div>
<div class="abs" style="left:1757.200px;top:767.800px;width:55.600px;height:55.600px;border-radius:50%;background:#52c1e5;box-shadow:0 4px 12px rgba(56,65,74,.18)"><svg class="abs" style="left:15.1px;top:14.4px" width="24.800" height="24.800" viewBox="0 0 24 24" fill="#fff"><path transform="rotate(-14 12 12)" d="M12,8A4,4 0 0,1 16,12A4,4 0 0,1 12,16A4,4 0 0,1 8,12A4,4 0 0,1 12,8M12,10A2,2 0 0,0 10,12A2,2 0 0,0 12,14A2,2 0 0,0 14,12A2,2 0 0,0 12,10M10,22C9.750,22 9.540,21.820 9.500,21.580L9.130,18.930C8.500,18.680 7.960,18.340 7.440,17.940L4.950,18.950C4.730,19.030 4.460,18.950 4.340,18.730L2.340,15.270C2.210,15.050 2.270,14.780 2.460,14.630L4.570,12.970L4.500,12L4.570,11L2.460,9.370C2.270,9.220 2.210,8.950 2.340,8.730L4.340,5.270C4.460,5.050 4.730,4.960 4.950,5.050L7.440,6.050C7.960,5.660 8.500,5.320 9.130,5.070L9.500,2.420C9.540,2.180 9.750,2 10,2H14C14.250,2 14.460,2.180 14.500,2.420L14.870,5.070C15.500,5.320 16.040,5.660 16.560,6.050L19.050,5.050C19.270,4.960 19.540,5.050 19.660,5.270L21.660,8.730C21.790,8.950 21.730,9.220 21.540,9.370L19.430,11L19.500,12L19.430,13L21.540,14.630C21.730,14.780 21.790,15.050 21.660,15.270L19.660,18.730C19.540,18.950 19.270,19.040 19.050,18.950L16.560,17.950C16.040,18.340 15.500,18.680 14.870,18.930L14.500,21.580C14.460,21.820 14.250,22 14,22H10M11.250,4L10.880,6.610C9.680,6.860 8.620,7.500 7.850,8.390L5.440,7.350L4.690,8.650L6.800,10.200C6.400,11.370 6.400,12.640 6.800,13.800L4.680,15.360L5.430,16.660L7.860,15.620C8.630,16.500 9.680,17.140 10.870,17.380L11.240,20H12.760L13.130,17.390C14.320,17.140 15.370,16.500 16.140,15.620L18.570,16.660L19.320,15.360L17.200,13.810C17.600,12.640 17.600,11.370 17.200,10.200L19.310,8.650L18.560,7.350L16.150,8.390C15.380,7.500 14.320,6.860 13.120,6.620L12.750,4H11.250Z"/></svg></div>
<div class="abs" style="left:1835px;top:0;width:18px;height:868px;background:#fff"></div>
<div class="abs" style="left:1841px;top:18px;width:6px;height:586px;background:#cdd7e1;border-radius:3px"></div>
<svg class="abs" style="left:1840.500px;top:6px" width="8" height="6" viewBox="0 0 8 6" fill="none" stroke="#a0a0a0" stroke-width="2"><path d="M.8 4.800 L4 1.500 L7.200 4.800"/></svg>
<svg class="abs" style="left:1840.500px;top:856.800px" width="8" height="6" viewBox="0 0 8 6" fill="none" stroke="#505050" stroke-width="2"><path d="M.8 1.200 L4 4.500 L7.200 1.200"/></svg>

</body>
</html>
